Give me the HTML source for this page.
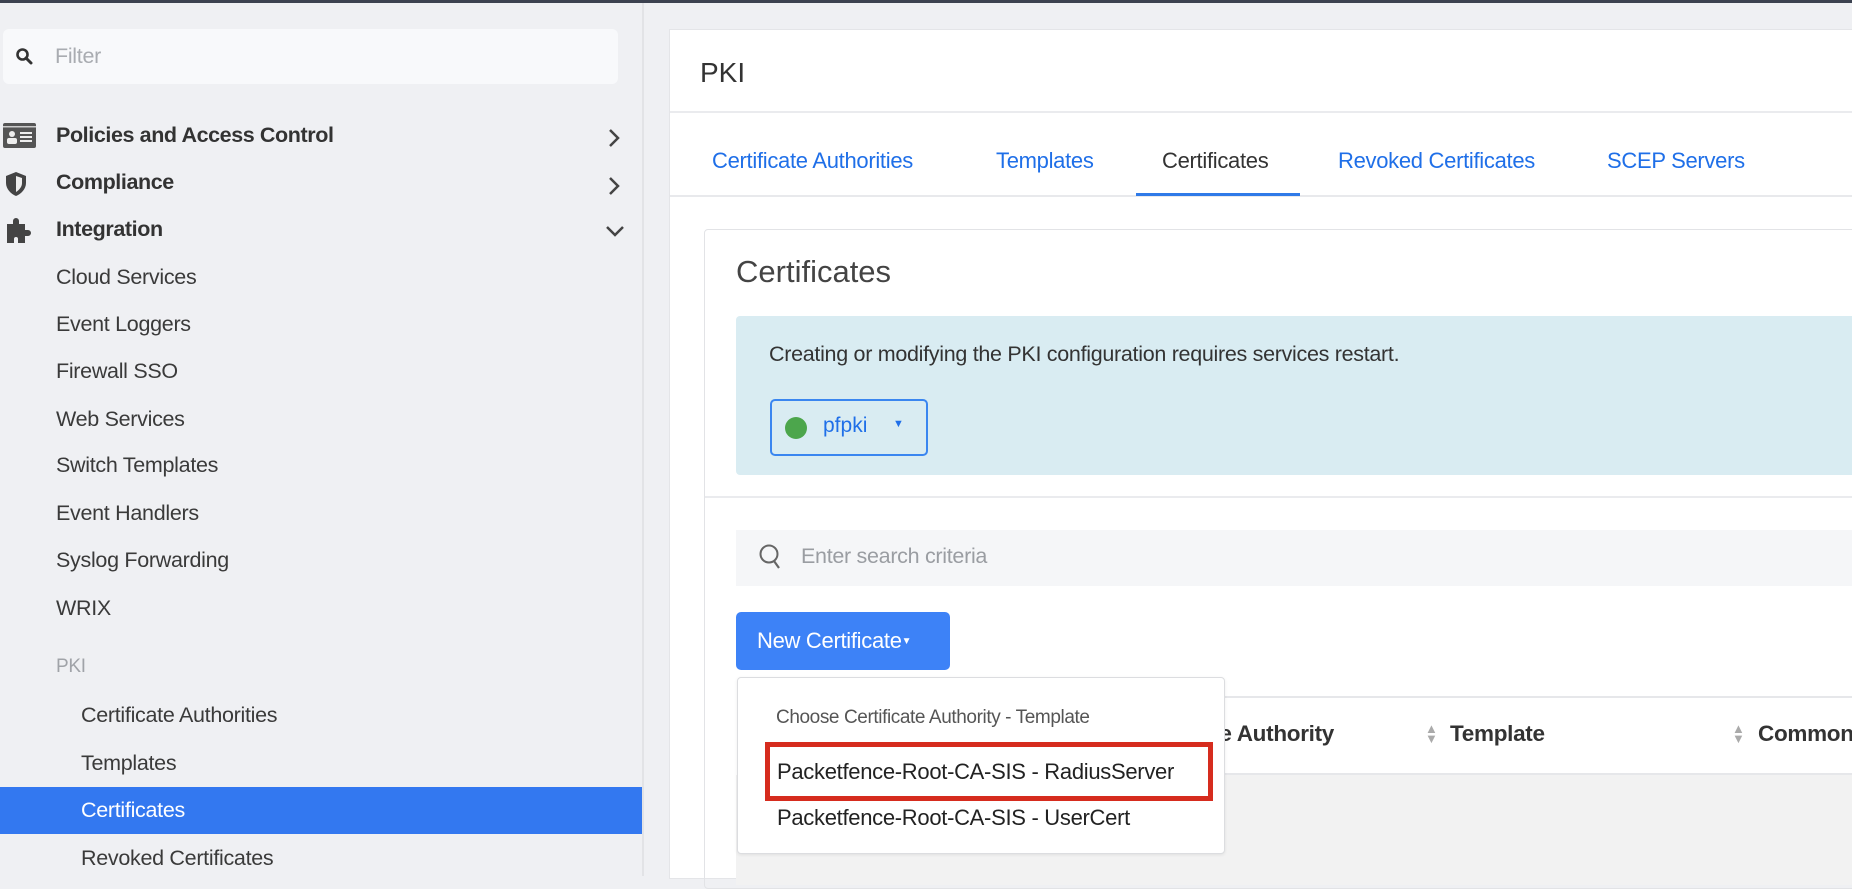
<!DOCTYPE html>
<html><head><meta charset="utf-8"><style>
*{margin:0;padding:0;box-sizing:border-box}
body{width:1852px;height:876px;overflow:hidden;background:#eff0f3;font-family:"Liberation Sans",sans-serif;position:relative;color:#333}
.a{position:absolute;white-space:nowrap}
.side{font-size:21.5px;color:#3a3a3a;letter-spacing:-0.3px}
.hd{font-size:21.5px;font-weight:bold;color:#333;letter-spacing:-0.4px}
.tab{font-size:22px;color:#1f6fe8;top:148px;letter-spacing:-0.3px}
</style></head><body>
<div class="a" style="left:0;top:0;width:1852px;height:3px;background:#3c4250"></div>
<div class="a" style="left:642px;top:3px;width:2px;height:873px;background:#e2e3e6"></div>
<!-- filter -->
<div class="a" style="left:3px;top:29px;width:615px;height:55px;background:#f8f9fb;border-radius:6px"></div>
<svg class="a" style="left:15px;top:47px" width="18" height="18" viewBox="0 0 18 18"><circle cx="7.5" cy="7.5" r="5" fill="none" stroke="#333" stroke-width="2.6"/><path d="M11 11l5 5" stroke="#333" stroke-width="3" stroke-linecap="round"/></svg>
<div class="a side" style="left:55px;top:44px;color:#a9acb1">Filter</div>
<!-- headers -->
<svg class="a" style="left:3px;top:123px" width="33" height="25" viewBox="0 0 33 25"><rect x="0" y="0" width="33" height="25" rx="2" fill="#555"/><rect x="0" y="3" width="33" height="1.5" fill="#ccc"/><circle cx="9" cy="11" r="3" fill="#eee"/><rect x="4" y="15" width="10" height="6" rx="2" fill="#eee"/><rect x="17" y="9" width="12" height="2" fill="#eee"/><rect x="17" y="13" width="12" height="2" fill="#eee"/><rect x="17" y="17" width="12" height="2" fill="#eee"/></svg>
<div class="a hd" style="left:56px;top:123px">Policies and Access Control</div>
<svg class="a" style="left:5px;top:171px" width="22" height="26" viewBox="0 0 22 26"><path d="M11 1L1 5v7c0 6 5 11 10 13 5-2 10-7 10-13V5z" fill="#444"/><path d="M11 5v16c3-2 6-5 6-9V7z" fill="#eee"/></svg>
<div class="a hd" style="left:56px;top:170px">Compliance</div>
<svg class="a" style="left:3px;top:216px" width="34" height="28" viewBox="0 0 34 28"><path d="M4 8h6V5a3 3 0 016 0v3h6v6h3a3 3 0 010 6h-3v7h-7v-4a2 2 0 00-4 0v4H4z" fill="#444"/></svg>
<div class="a hd" style="left:56px;top:217px">Integration</div>
<svg class="a" style="left:607px;top:128px" width="14" height="20" viewBox="0 0 14 20"><path d="M3 2l8 8-8 8" fill="none" stroke="#444" stroke-width="2.5"/></svg>
<svg class="a" style="left:607px;top:176px" width="14" height="20" viewBox="0 0 14 20"><path d="M3 2l8 8-8 8" fill="none" stroke="#444" stroke-width="2.5"/></svg>
<svg class="a" style="left:605px;top:224px" width="20" height="14" viewBox="0 0 20 14"><path d="M2 3l8 8 8-8" fill="none" stroke="#444" stroke-width="2.5"/></svg>
<div class="a side" style="left:56px;top:265px">Cloud Services</div>
<div class="a side" style="left:56px;top:312px">Event Loggers</div>
<div class="a side" style="left:56px;top:359px">Firewall SSO</div>
<div class="a side" style="left:56px;top:407px">Web Services</div>
<div class="a side" style="left:56px;top:453px">Switch Templates</div>
<div class="a side" style="left:56px;top:501px">Event Handlers</div>
<div class="a side" style="left:56px;top:548px">Syslog Forwarding</div>
<div class="a side" style="left:56px;top:596px">WRIX</div>
<div class="a side" style="left:56px;top:656px;color:#a0a3a8;font-size:19px">PKI</div>
<div class="a side" style="left:81px;top:703px">Certificate Authorities</div>
<div class="a side" style="left:81px;top:751px">Templates</div>
<div class="a" style="left:0;top:787px;width:642px;height:47px;background:#3378f0"></div>
<div class="a side" style="left:81px;top:798px;color:#fff">Certificates</div>
<div class="a side" style="left:81px;top:846px">Revoked Certificates</div>
<!-- main card -->
<div class="a" style="left:669px;top:29px;width:1190px;height:850px;background:#fff;border:1px solid #e4e5e8"></div>
<div class="a" style="left:700px;top:57px;font-size:28px;color:#333">PKI</div>
<div class="a" style="left:670px;top:111px;width:1182px;height:2px;background:#eaebee"></div>
<div class="a tab" style="left:712px">Certificate Authorities</div>
<div class="a tab" style="left:996px">Templates</div>
<div class="a tab" style="left:1162px;color:#333">Certificates</div>
<div class="a tab" style="left:1338px">Revoked Certificates</div>
<div class="a tab" style="left:1607px">SCEP Servers</div>
<div class="a" style="left:670px;top:195px;width:1182px;height:2px;background:#e8e9ec"></div>
<div class="a" style="left:1136px;top:193px;width:164px;height:3px;background:#2f7ae8"></div>
<!-- inner card -->
<div class="a" style="left:704px;top:229px;width:1160px;height:660px;border:1px solid #e2e3e6;border-radius:4px"></div>
<div class="a" style="left:736px;top:254px;font-size:31px;color:#444">Certificates</div>
<div class="a" style="left:736px;top:316px;width:1130px;height:159px;background:#d9ecf2;border-radius:4px"></div>
<div class="a" style="left:769px;top:342px;font-size:21.5px;color:#333;letter-spacing:-0.3px">Creating or modifying the PKI configuration requires services restart.</div>
<div class="a" style="left:770px;top:399px;width:158px;height:57px;border:2px solid #3a86f0;border-radius:5px"></div>
<div class="a" style="left:785px;top:417px;width:22px;height:22px;border-radius:50%;background:#4ca64c"></div>
<div class="a" style="left:823px;top:414px;font-size:21px;color:#1f6fe8">pfpki</div>
<div class="a" style="left:893px;top:418px;font-size:11px;color:#1f6fe8">▼</div>
<div class="a" style="left:705px;top:496px;width:1150px;height:2px;background:#eaebee"></div>
<div class="a" style="left:736px;top:530px;width:1120px;height:56px;background:#f5f6f8"></div>
<svg class="a" style="left:758px;top:543px" width="26" height="30" viewBox="0 0 26 30"><circle cx="11" cy="11" r="8.5" fill="none" stroke="#666" stroke-width="2"/><path d="M16 18l5 7" stroke="#666" stroke-width="2.2"/></svg>
<div class="a" style="left:801px;top:544px;font-size:21.5px;color:#9a9da2;letter-spacing:-0.3px">Enter search criteria</div>
<div class="a" style="left:736px;top:612px;width:214px;height:58px;background:#3d82f7;border-radius:5px"></div>
<div class="a" style="left:757px;top:628px;font-size:22px;color:#fff;letter-spacing:-0.3px">New Certificate<span style="font-size:10px;vertical-align:4px">▼</span></div>
<!-- table header -->
<div class="a" style="left:1225px;top:696px;width:640px;height:79px;border-top:2px solid #e6e7ea;border-bottom:2px solid #e6e7ea"></div>
<div class="a" style="left:736px;top:775px;width:1130px;height:110px;background:#f2f2f2"></div>
<div class="a" style="left:1200px;top:721px;font-size:22.5px;font-weight:bold;color:#333;letter-spacing:-0.3px">ate Authority</div>
<div class="a" style="left:1425px;top:724px;font-size:13px;color:#aaa;line-height:10px">▲<br>▼</div>
<div class="a" style="left:1450px;top:721px;font-size:22.5px;font-weight:bold;color:#333;letter-spacing:-0.3px">Template</div>
<div class="a" style="left:1732px;top:724px;font-size:13px;color:#aaa;line-height:10px">▲<br>▼</div>
<div class="a" style="left:1758px;top:721px;font-size:22.5px;font-weight:bold;color:#333;letter-spacing:-0.3px">Common</div>
<!-- dropdown -->
<div class="a" style="left:737px;top:677px;width:488px;height:177px;background:#fff;border:1px solid #dcdde0;border-radius:4px;box-shadow:0 1px 3px rgba(0,0,0,.08)"></div>
<div class="a" style="left:776px;top:707px;font-size:19px;color:#555;letter-spacing:-0.4px">Choose Certificate Authority - Template</div>
<div class="a" style="left:765px;top:742px;width:448px;height:59px;border:5px solid #d62c1e"></div>
<div class="a" style="left:777px;top:759px;font-size:22px;color:#222;letter-spacing:-0.3px">Packetfence-Root-CA-SIS - RadiusServer</div>
<div class="a" style="left:777px;top:805px;font-size:22px;color:#222;letter-spacing:-0.3px">Packetfence-Root-CA-SIS - UserCert</div>
</body></html>
